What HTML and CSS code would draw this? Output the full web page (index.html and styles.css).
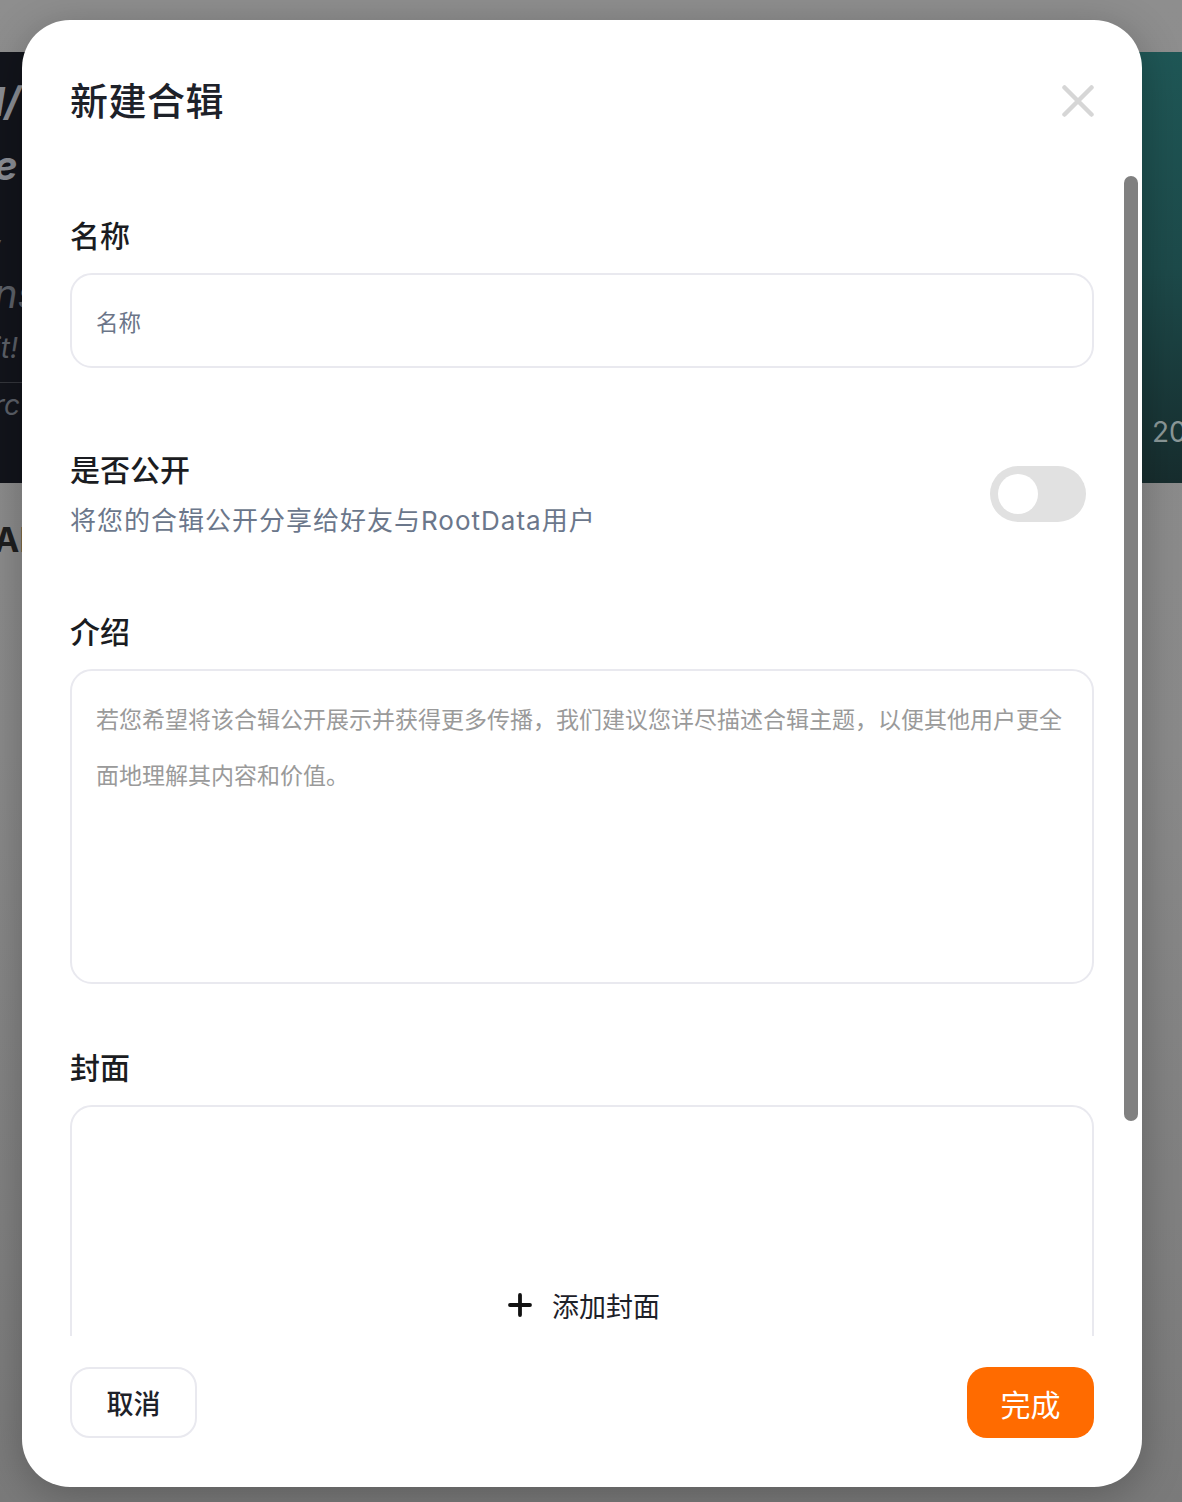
FILE: index.html
```html
<!DOCTYPE html>
<html lang="zh-CN">

<head>
    <meta charset="UTF-8" />
    <title>新建合辑</title>
    <link rel="stylesheet" href="styles.css">
</head>

<body>

    <!-- 背景页面（被遮罩） -->
    <div class="backdrop">
        <div class="bg-card bg-left">
            <div class="bg-line big">l/</div>
            <div class="bg-line big">e</div>
            <div class="bg-line">,</div>
            <div class="bg-line">ns</div>
            <div class="bg-line small">it!</div>
            <div class="bg-divider"></div>
            <div class="bg-line small">rc</div>
        </div>
        <div class="bg-card bg-right">
            <div class="bg-year">20</div>
        </div>
    </div>
    <div class="bg-ai">AI</div>

    <!-- 弹窗 -->
    <div class="overlay">
        <div class="modal">
            <div class="modal-header">
                <div class="modal-title">新建合辑</div>
                <button class="close-btn" aria-label="关闭">
                    <svg width="32" height="32" viewBox="0 0 32 32" fill="none">
                        <path d="M2.5 2.5 L29.5 29.5 M29.5 2.5 L2.5 29.5" stroke="#d6d6d6" stroke-width="4.5" stroke-linecap="round" />
                    </svg>
                </button>
            </div>

            <div class="modal-body">
                <div class="field">
                    <div class="field-label">名称</div>
                    <div class="text-input">名称</div>
                </div>

                <div class="field field-public">
                    <div class="public-text">
                        <div class="field-label">是否公开</div>
                        <div class="field-desc">将您的合辑公开分享给好友与RootData用户</div>
                    </div>
                    <div class="toggle"><div class="toggle-knob"></div></div>
                </div>

                <div class="field field-intro">
                    <div class="field-label">介绍</div>
                    <div class="text-area">若您希望将该合辑公开展示并获得更多传播，我们建议您详尽描述合辑主题，以便其他用户更全面地理解其内容和价值。</div>
                </div>

                <div class="field field-cover">
                    <div class="field-label">封面</div>
                    <div class="cover-box">
                        <svg width="24" height="24" viewBox="0 0 24 24" fill="none">
                            <path d="M12 2 V22 M2 12 H22" stroke="#111" stroke-width="3.8" stroke-linecap="round" />
                        </svg>
                        <span>添加封面</span>
                    </div>
                </div>
            </div>

            <div class="scroll-thumb"></div>

            <div class="modal-footer">
                <button class="btn btn-cancel">取消</button>
                <button class="btn btn-done">完成</button>
            </div>
        </div>
    </div>

</body>

</html>
```

FILE: styles.css
```css
* {
    margin: 0;
    padding: 0;
    box-sizing: border-box;
    font-family: 'Inter', 'Noto Sans CJK SC', sans-serif;
}

html,
body {
    width: 100%;
    height: 100%;
    overflow: hidden;
    background: linear-gradient(180deg, #8e8e8e 0%, #8a8a8a 50%, #7a7a7a 100%);
}

/* 背景页面 */
.backdrop {
    display: flex;
    justify-content: space-between;
    padding-top: 52px;
}

.bg-card {
    height: 431px;
    overflow: hidden;
}

.bg-left {
    width: 60px;
    background-color: #12141b;
    color: #5c6068;
    padding-top: 18px;
}

.bg-line {
    font-size: 40px;
    font-style: italic;
    line-height: 64px;
    margin-left: -6px;
}

.bg-line.big {
    color: #8a8d94;
    font-weight: 700;
}

.bg-line.small {
    font-size: 28px;
    line-height: 44px;
}

.bg-divider {
    height: 1px;
    background-color: #34363c;
    margin-top: 12px;
}

.bg-right {
    width: 60px;
    background: linear-gradient(180deg, #1f5756 0%, #1d4a4a 50%, #172d2e 100%);
    display: flex;
    align-items: flex-end;
    justify-content: flex-end;
    padding-bottom: 34px;
}

.bg-year {
    width: 30px;
    font-size: 28px;
    color: #8b9898;
    white-space: nowrap;
}

.bg-ai {
    font-size: 34px;
    font-weight: 700;
    color: #1e1e1e;
    margin-top: 36px;
    margin-left: -6px;
}

/* 弹窗 */
.overlay {
    position: absolute;
    top: 0;
    left: 0;
    width: 100%;
    height: 100%;
    padding: 20px 0 0 22px;
}

.modal {
    position: relative;
    width: 1120px;
    height: 1467px;
    background-color: #ffffff;
    border-radius: 48px;
    box-shadow: 0 8px 40px rgba(0, 0, 0, 0.25);
    display: flex;
    flex-direction: column;
    overflow: hidden;
}

.modal-header {
    display: flex;
    justify-content: space-between;
    align-items: center;
    padding: 56px 48px 0;
    height: 106px;
}

.modal-title {
    font-size: 38px;
    font-weight: 500;
    line-height: 50px;
    letter-spacing: 0.5px;
    color: #1d2129;
}

.close-btn {
    border: none;
    background: none;
    width: 32px;
    height: 32px;
    display: flex;
    cursor: pointer;
}

.modal-body {
    flex: 1;
    overflow: hidden;
    padding: 89px 48px 0;
}

.field-label {
    font-size: 30px;
    font-weight: 500;
    line-height: 42px;
    color: #1a1c21;
}

.text-input {
    margin-top: 16px;
    height: 95px;
    border: 2px solid #e9e9ef;
    border-radius: 22px;
    padding: 0 24px;
    display: flex;
    align-items: center;
    font-size: 22.5px;
    color: #6b7588;
}

.field-public {
    display: flex;
    justify-content: space-between;
    align-items: center;
    margin-top: 81px;
}

.field-desc {
    margin-top: 12px;
    font-size: 26px;
    line-height: 36px;
    letter-spacing: 1px;
    color: #6b778b;
}

.toggle {
    width: 96px;
    height: 56px;
    border-radius: 28px;
    background-color: #e1e1e1;
    padding: 8px;
    margin-right: 8px;
}

.toggle-knob {
    width: 40px;
    height: 40px;
    border-radius: 50%;
    background-color: #ffffff;
}

.field-intro {
    margin-top: 72px;
}

.text-area {
    margin-top: 16px;
    height: 315px;
    border: 2px solid #e9e9ef;
    border-radius: 22px;
    padding: 21px 24px 0;
    font-size: 23px;
    line-height: 56px;
    color: #9a9a9a;
}

.field-cover {
    margin-top: 63px;
}

.cover-box {
    margin-top: 16px;
    height: 400px;
    border: 2px solid #e9e9ef;
    border-radius: 22px;
    display: flex;
    justify-content: center;
    align-items: center;
    gap: 20px;
    padding-left: 4px;
    font-size: 27px;
    color: #1d2129;
}

.scroll-thumb {
    position: absolute;
    top: 156px;
    left: 1102px;
    width: 14px;
    height: 945px;
    border-radius: 7px;
    background-color: #808080;
}

.modal-footer {
    display: flex;
    justify-content: space-between;
    padding: 31px 48px 49px;
}

.btn {
    width: 127px;
    height: 71px;
    border-radius: 20px;
    font-size: 27px;
    cursor: pointer;
}

.btn-cancel {
    background-color: #ffffff;
    border: 2px solid #e9e9ef;
    color: #1d2129;
    font-weight: 500;
}

.btn-done {
    background-color: #ff6b00;
    border: none;
    color: #ffffff;
    font-size: 30px;
}
```
